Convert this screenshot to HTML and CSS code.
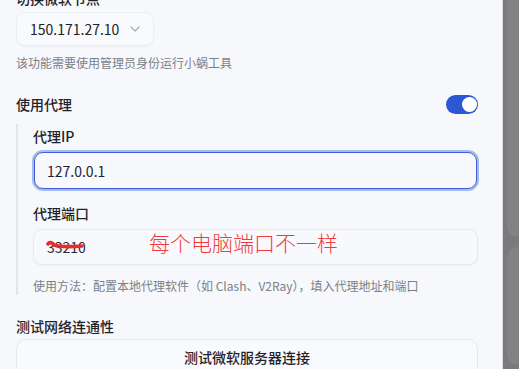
FILE: index.html
```html
<!DOCTYPE html>
<html lang="zh-CN">
<head>
<meta charset="utf-8">
<title>设置</title>
<link rel="stylesheet" href="styles.css">
</head>
<body>
<div class="screen">
  <main class="panel">
    <div class="label top-label">切换微软节点</div>
    <div class="select">
      <span class="select-value">150.171.27.10</span>
      <svg class="chevron" width="10" height="6" viewBox="0 0 10 6"><path d="M1 1l4 4 4-4" fill="none" stroke="#a9abb3" stroke-width="1.2" stroke-linecap="round" stroke-linejoin="round"/></svg>
    </div>
    <p class="hint">该功能需要使用管理员身份运行小蜗工具</p>

    <div class="row">
      <span class="label">使用代理</span>
      <span class="toggle"><span class="knob"></span></span>
    </div>

    <section class="group">
      <div class="label">代理IP</div>
      <div class="input focus">127.0.0.1</div>
      <div class="label gap-top">代理端口</div>
      <div class="input port">
        <span class="port-text">33210</span>
        <svg class="scribble" width="40" height="12" viewBox="0 0 40 12"><path d="M2 4 C3 2 6 2 8 5 C14 7 24 7 36 6" fill="none" stroke="#ec2a2e" stroke-width="3.6" stroke-linecap="round"/></svg>
        <span class="note">每个电脑端口不一样</span>
      </div>
      <p class="hint usage">使用方法：配置本地代理软件（如 Clash、V2Ray），填入代理地址和端口</p>
    </section>

    <div class="label section-title">测试网络连通性</div>
    <button class="btn">测试微软服务器连接</button>
  </main>
  <aside class="side">
    <div class="side-card first"></div>
    <div class="side-card second"></div>
  </aside>
</div>
</body>
</html>
```

FILE: styles.css
```css
html, body {
  margin: 0;
  padding: 0;
  height: 369px;
  overflow: hidden;
  background: #f6f8fc;
}
body {
  font-family: "Noto Sans CJK SC", "Noto Sans", sans-serif;
  color: #1f2329;
}
.screen {
  display: flex;
  height: 369px;
}
.panel {
  flex: none;
  padding: 0 24px 0 16px;
  box-sizing: content-box;
  width: 462px;
  background: #f6f8fc;
  border-right: 1px solid #d9dade;
  display: flex;
  flex-direction: column;
  align-items: flex-start;
  overflow: hidden;
}
.panel > *,
.group > *,
.side > * {
  flex-shrink: 0;
}
.label {
  font-size: 14px;
  line-height: 20px;
  height: 20px;
  font-weight: 500;
  color: #1f2329;
}
.top-label {
  margin-top: -12px;
}
.select {
  margin-top: 4px;
  height: 34px;
  width: 138px;
  box-sizing: border-box;
  border: 1px solid #eceef3;
  border-radius: 9px;
  background: #f9fafd;
  box-shadow: 0 1px 2px rgba(20, 30, 60, 0.04);
  display: flex;
  align-items: center;
  padding: 0 0 0 13px;
  gap: 11px;
  font-size: 14px;
  color: #222;
}
.chevron {
  display: block;
}
.hint {
  margin: 8px 0 0;
  font-size: 12px;
  line-height: 18px;
  color: #7b7f87;
}
.row {
  margin-top: 22px;
  align-self: stretch;
  display: flex;
  justify-content: space-between;
  align-items: center;
  height: 20px;
}
.toggle {
  position: relative;
  width: 32px;
  height: 19px;
  border-radius: 10px;
  background: #2c58d6;
  display: block;
}
.knob {
  position: absolute;
  right: 1.5px;
  top: 2px;
  width: 15px;
  height: 15px;
  border-radius: 50%;
  background: #fff;
  box-shadow: 0 0 0 0.5px #2c58d6;
}
.group {
  margin-top: 10px;
  align-self: stretch;
  border-left: 2px solid #e3e5ea;
  padding: 2px 0 0 15px;
  display: flex;
  flex-direction: column;
  align-items: stretch;
}
.group .label {
  align-self: flex-start;
}
.input {
  margin-top: 6px;
  height: 37px;
  box-sizing: border-box;
  border-radius: 9px;
  background: #f8f9fd;
  border: 1px solid #e8eaef;
  display: flex;
  align-items: center;
  padding-left: 13px;
  font-size: 14px;
  color: #1f2329;
  position: relative;
}
.input.focus {
  border: 1.5px solid #3c61d6;
  box-shadow: 0 0 0 2px #a9b9ee;
  margin-left: 1px;
  margin-right: 1px;
  padding-left: 12px;
}
.gap-top {
  margin-top: 14px;
}
.input.port {
  height: 36px;
  box-shadow: 0 1px 2px rgba(20, 30, 60, 0.03);
}
.port-text {
  color: #2a2d33;
}
.scribble {
  position: absolute;
  left: 12px;
  top: 10px;
}
.note {
  position: absolute;
  left: 115px;
  top: -1px;
  font-size: 21px;
  line-height: 26px;
  font-weight: 300;
  color: #f2393b;
  white-space: nowrap;
}
.usage {
  margin-top: 12px;
}
.section-title {
  margin-top: 21px;
}
.btn {
  margin-top: 3px;
  align-self: stretch;
  height: 38px;
  border: 1px solid #e6e8ee;
  border-radius: 10px;
  background: #f9fafd;
  font-family: inherit;
  font-size: 14px;
  font-weight: 500;
  color: #1f2329;
  padding: 0 0 2px;
}
.side {
  flex: 1;
  background: #7a797b;
  display: flex;
  flex-direction: column;
  padding-left: 4px;
  gap: 10px;
}
.side-card {
  background: #838284;
  border-radius: 11px 0 0 11px;
}
.side-card.first {
  height: 247px;
  margin-top: -10px;
}
.side-card.second {
  height: 118px;
}
```
